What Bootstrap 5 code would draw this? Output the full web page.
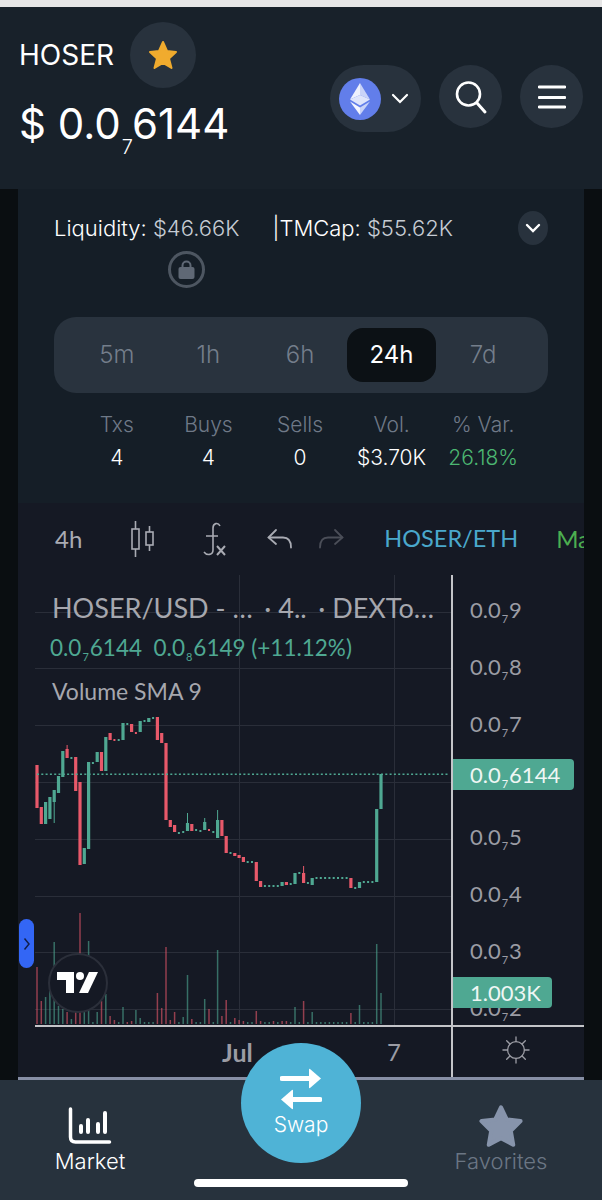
<!DOCTYPE html>
<html lang="en">
<head>
<meta charset="UTF-8" />
<meta name="viewport" content="width=device-width, initial-scale=1.0" />
<title>HOSER</title>
<link href="https://cdn.jsdelivr.net/npm/bootstrap@5.3.3/dist/css/bootstrap.min.css" rel="stylesheet" />
<style>
	html, body { height: 1200px; overflow: hidden; }
	body { background: #0a0e11; font-family: Inter, "Liberation Sans", sans-serif; font-weight: 300; color: #fff; }
	.top-strip { height: 7px; background: #e6e6e6; }

	.app-head { height: 182px; background: #18212a; padding: 15px 19px 0; }
	.coin-name { font-size: 28px; font-weight: 400; }
	.coin-price { font-size: 42px; font-weight: 400; line-height: 1; margin-top: 15px; white-space: nowrap; }
	.coin-price span { font-size: 20px; font-weight: 300; position: relative; top: 15px; margin: 0 -1px 0 1px; }
	.round-btn { background: #28323d; border-radius: 50%; width: 63px; height: 63px; }
	.fav-btn { width: 66px; height: 66px; margin-left: 16px; }
	.net-btn { width: 91px; height: 67px; border-radius: 34px; background: #28323d; padding-left: 9px; gap: 10px; }
	.head-right { margin-top: 43px; gap: 18px; }

	.info-card { width: 566px; height: 314px; margin-left: 18px; background: #151e27; padding: 22px 36px 0; }
	.liq-row { font-size: 22px; line-height: 32px; white-space: nowrap; }
	.liq-row b { font-weight: 300; color: #c6ccd4; }
	.liq-gap { margin-left: 33px; }
	.liq-more { width: 30px; height: 34px; border-radius: 50%; background: #28323d; margin-left: auto; }
	.lock-ring { width: 37px; height: 37px; border: 3px solid #4d5661; border-radius: 50%; margin: 6px 0 0 114px; }

	.range-tabs { height: 76px; margin-top: 29px; background: #29333e; border-radius: 22px; padding: 0 17px; }
	.range-tabs div { width: 91.6px; text-align: center; font-size: 24px; color: #747e8b; }
	.range-tabs span { display: block; width: 89px; height: 54px; line-height: 54px; margin: 0 auto; border-radius: 16px; }
	.range-tabs .on span { background: #0c1115; color: #fff; font-weight: 400; }
	.stat-row { padding: 0 17px; margin-top: 15px; }
	.stat-row > div { width: 91.6px; text-align: center; white-space: nowrap; font-size: 21px; line-height: 33px; }
	.stat-row small { display: block; font-size: 21px; color: #6f7987; }
	.up-txt { color: #4cb772; }

	.chart-box { width: 566px; height: 577px; margin-left: 18px; background: #151924; overflow: hidden; position: relative; font-family: Lato, "DejaVu Sans", sans-serif; font-weight: 400; }
	.chart-tools { height: 72px; padding-left: 37px; white-space: nowrap; font-size: 24px; color: #a9abb3; }
	.chart-tools > * { flex-shrink: 0; }
	.tool-candle { margin-left: 48px; }
	.tool-fx { margin-left: 45px; }
	.tool-undo { margin-left: 41px; }
	.tool-redo { margin-left: 25px; }
	.pair-link { color: #4aa8cc; margin-left: 40px; font-size: 23.5px; }
	.tool-more { color: #4caf50; margin-left: 38px; }

	.chart-main { height: 450px; }
	.pane-wrap { width: 433px; height: 450px; position: relative; }
	.pane-wrap svg { display: block; }
	.chart-legend { position: absolute; left: 34px; top: 13px; width: 382px; color: #a6a7ae; }
	.leg-title { font-size: 27px; line-height: 40px; white-space: nowrap; }
	.leg-vals { font-size: 22.5px; line-height: 40px; color: #4fa892; white-space: nowrap; margin-left: -2px; }
	.leg-vol { font-size: 23px; line-height: 46px; margin-top: -4px; }
	.chart-legend i, .price-axis i { font-style: normal; font-size: 11px; position: relative; top: 5px; margin: 0 1px; }

	.price-axis { width: 133px; height: 450px; overflow: hidden; border-left: 2px solid #c4c5c9; padding: 7px 0 0 17px; font-size: 22px; color: #9b9ca4; position: relative; }
	.price-axis .axis-row { height: 56.8px; line-height: 56.8px; }
	.price-axis .axis-tag { position: absolute; left: 0; height: 31px; line-height: 31px; background: #4fa892; color: #eef6f4; padding-left: 17px; border-radius: 0 4px 4px 0; }
	.price-axis .tag-price { top: 184px; width: 121px; }
	.price-axis .tag-vol { top: 402px; width: 99px; }

	.time-axis { height: 52px; border-top: 2px solid #c4c5c9; margin-left: 17px; }
	.time-scale { width: 416px; height: 50px; position: relative; font-size: 24px; color: #9b9ca4; }
	.time-scale span { position: absolute; top: 7px; }
	.time-jul { left: 187px; font-weight: 700; font-size: 25px; }
	.time-seven { left: 352px; }
	.time-corner { width: 133px; border-left: 2px solid #c4c5c9; padding: 0 5px 4px 0; }
	.chart-foot { height: 3px; background: #878fa5; }

	.side-handle { position: absolute; left: 1px; top: 416px; width: 15px; height: 49px; background: #3366f5; border-radius: 8px; }
	.tv-badge { position: absolute; left: 30px; top: 450px; width: 60px; height: 60px; border-radius: 50%; background: #151924; border: 2px solid #2b2f3a; }

	.bottom-nav { height: 120px; background: #27323d; position: relative; font-size: 22px; }
	.nav-item-box { position: absolute; width: 130px; text-align: center; line-height: 30px; }
	.nav-item-box svg { display: block; margin: 0 auto; }
	.nav-market { left: 25px; top: 27px; }
	.nav-market div { margin-top: 1px; }
	.nav-favs { left: 436px; top: 24px; color: #6b7684; }
	.nav-favs div { margin-top: -2px; }
	.swap-fab { position: absolute; left: 241px; top: -37px; width: 120px; height: 120px; border-radius: 50%; background: #4fb3d6; text-align: center; font-size: 21px; padding-top: 25px; line-height: 26px; }
	.swap-fab svg { display: block; margin: 0 auto 2px; }
	.home-bar { position: absolute; left: 194px; top: 99px; width: 214px; height: 8px; background: #fff; border-radius: 4px; }
</style>
</head>
<body>
	<div class="top-strip"></div>

	<!-- Header -->
	<header class="app-head d-flex justify-content-between">
		<div>
			<div class="d-flex align-items-center">
				<div class="coin-name">HOSER</div>
				<div class="round-btn fav-btn d-flex align-items-center justify-content-center">
					<svg width="34" height="34" viewBox="0 0 34 34"><polygon points="17,4 21,13 30,14 23,20.500 25.500,30 17,25 8.500,30 11,20.500 4,14 13,13" fill="#f0ab2e" stroke="#f0ab2e" stroke-width="2" stroke-linejoin="round"/></svg>
				</div>
			</div>
			<div class="coin-price">$ 0.0<span>7</span>6144</div>
		</div>
		<div class="d-flex align-items-start head-right">
			<div class="net-btn d-flex align-items-center">
				<svg width="42" height="42" viewBox="0 0 42 42">
					<circle cx="21" cy="21" r="21" fill="#627eea"/>
					<path d="M21 5v12l-10 4.500z" fill="#eef1fd"/>
					<path d="M21 5v12l10 4.500z" fill="#c9d3f8"/>
					<path d="M11 21.500l10-4.500 10 4.500-10 6z" fill="#dfe5fb"/>
					<path d="M11 23.500l10 6v7.500z" fill="#f4f6fe"/>
					<path d="M31 23.500l-10 6v7.500z" fill="#c9d3f8"/>
				</svg>
				<svg width="18" height="12" viewBox="0 0 18 12"><path d="M2 2l7 7 7-7" fill="none" stroke="#fff" stroke-width="2.200" stroke-linecap="round"/></svg>
			</div>
			<div class="round-btn d-flex align-items-center justify-content-center">
				<svg width="34" height="36" viewBox="0 0 34 36"><circle cx="14.500" cy="15" r="11.500" fill="none" stroke="#fff" stroke-width="2.600"/><path d="M23 24l8 9" stroke="#fff" stroke-width="3" stroke-linecap="round"/></svg>
			</div>
			<div class="round-btn d-flex align-items-center justify-content-center">
				<svg width="28" height="24" viewBox="0 0 28 24"><path d="M1 2h26M1 12.500h26M1 22h26" stroke="#fff" stroke-width="2.800" stroke-linecap="round"/></svg>
			</div>
		</div>
	</header>

	<!-- Liquidity + stats -->
	<section class="info-card">
		<div class="d-flex align-items-center liq-row">
			<span>Liquidity: <b>$46.66K</b></span>
			<span class="liq-gap">|TMCap: <b>$55.62K</b></span>
			<div class="liq-more d-flex align-items-center justify-content-center">
				<svg width="16" height="11" viewBox="0 0 16 11"><path d="M2 2l6 6 6-6" fill="none" stroke="#fff" stroke-width="2.400" stroke-linecap="round"/></svg>
			</div>
		</div>
		<div class="lock-ring d-flex align-items-center justify-content-center">
			<svg width="17" height="20" viewBox="0 0 17 20"><path d="M4.500 8V5.500a4 4 0 0 1 8 0V8" fill="none" stroke="#5f6875" stroke-width="2"/><rect x="0.500" y="7" width="16" height="12" rx="2" fill="#5f6875"/></svg>
		</div>
		<div class="range-tabs d-flex align-items-center">
			<div><span>5m</span></div><div><span>1h</span></div><div><span>6h</span></div><div class="on"><span>24h</span></div><div><span>7d</span></div>
		</div>
		<div class="stat-row d-flex">
			<div><small>Txs</small>4</div>
			<div><small>Buys</small>4</div>
			<div><small>Sells</small>0</div>
			<div><small>Vol.</small>$3.70K</div>
			<div><small>% Var.</small><span class="up-txt">26.18%</span></div>
		</div>
	</section>

	<!-- Chart -->
	<section class="chart-box">
		<div class="chart-tools d-flex align-items-center">
			<span>4h</span>
			<svg class="tool-candle" width="25" height="38" viewBox="0 0 25 38" fill="none" stroke="#a9abb3" stroke-width="1.600"><rect x="2" y="9" width="7" height="20"/><path d="M5.500 1v8M5.500 29v8"/><rect x="16" y="12" width="7" height="13"/><path d="M19.500 6v6M19.500 25v6"/></svg>
			<svg class="tool-fx" width="26" height="36" viewBox="0 0 26 36" fill="none" stroke="#a9abb3" stroke-width="1.600"><path d="M20 5c-2-4-7-3-7 2v22c0 5-6 6-9 2M6 15h12"/><path d="M17 25l8 9M25 25l-8 9" stroke-width="2"/></svg>
			<svg class="tool-undo" width="26" height="22" viewBox="0 0 26 22" fill="none" stroke="#a9abb3" stroke-width="1.800" stroke-linecap="round"><path d="M9 2L1.500 9.500 9 16"/><path d="M2 9.500h14c5 0 8 3 8 10"/></svg>
			<svg class="tool-redo" width="26" height="22" viewBox="0 0 26 22" fill="none" stroke="#4b4e58" stroke-width="1.800" stroke-linecap="round"><path d="M17 2l7.500 7.500L17 16"/><path d="M24 9.500H10c-5 0-8 3-8 10"/></svg>
			<span class="pair-link">HOSER/ETH</span>
			<span class="tool-more">Market</span>
		</div>

		<div class="chart-main d-flex">
			<div class="pane-wrap">
				<svg id="pane" width="433" height="450" viewBox="18 575 433 450"></svg>
				<div class="chart-legend">
					<div class="leg-title d-flex justify-content-between"><span>HOSER/USD - …</span><span>· 4..</span><span>· DEXTo…</span></div>
					<div class="leg-vals">0.0<i>7</i>6144&nbsp; 0.0<i>8</i>6149 (+11.12%)</div>
					<div class="leg-vol">Volume SMA 9</div>
				</div>
			</div>
			<div class="price-axis">
				<div class="axis-row">0.0<i>7</i>9</div>
				<div class="axis-row">0.0<i>7</i>8</div>
				<div class="axis-row">0.0<i>7</i>7</div>
				<div class="axis-row"></div>
				<div class="axis-row">0.0<i>7</i>5</div>
				<div class="axis-row">0.0<i>7</i>4</div>
				<div class="axis-row">0.0<i>7</i>3</div>
				<div class="axis-row">0.0<i>7</i>2</div>
				<div class="axis-tag tag-price">0.0<i>7</i>6144</div>
				<div class="axis-tag tag-vol">1.003K</div>
			</div>
		</div>

		<div class="time-axis d-flex">
			<div class="time-scale">
				<span class="time-jul">Jul</span>
				<span class="time-seven">7</span>
			</div>
			<div class="time-corner d-flex align-items-center justify-content-center">
				<svg width="28" height="28" viewBox="0 0 30 30" fill="none" stroke="#9b9ca4" stroke-width="1.400" stroke-linecap="round"><circle cx="15" cy="15" r="9"/><path d="M15 1v5M15 24v5M1 15h5M24 15h5M5 5l3.500 3.500M21.500 21.500L25 25M25 5l-3.500 3.500M8.500 21.500L5 25"/></svg>
			</div>
		</div>
		<div class="chart-foot"></div>

		<div class="side-handle d-flex align-items-center justify-content-center">
			<svg width="8" height="14" viewBox="0 0 8 14"><path d="M1.500 1.500L6 7l-4.500 5.500" fill="none" stroke="#12204d" stroke-width="1.500"/></svg>
		</div>
		<div class="tv-badge d-flex align-items-center justify-content-center">
			<svg width="42" height="22" viewBox="0 0 42 22" fill="#fff"><path d="M0 0h17v21H9V8H0z"/><circle cx="23" cy="4" r="4"/><path d="M32 0h9l-10 21h-9z"/></svg>
		</div>
	</section>

	<!-- Bottom nav -->
	<nav class="bottom-nav">
		<div class="nav-item-box nav-market">
			<svg width="44" height="38" viewBox="0 0 44 38" fill="none" stroke="#fff" stroke-linecap="round"><path d="M2.500 2v28q0 5 5 5h34" stroke-width="3.500"/><path d="M13 25v-6M20 25V13M30 25v-8M37 25V6" stroke-width="4"/></svg>
			<div>Market</div>
		</div>
		<div class="swap-fab">
			<svg width="42" height="42" viewBox="0 0 42 42" fill="#fff"><path d="M2 10.500h28" stroke="#fff" stroke-width="5" stroke-linecap="round"/><path d="M29 1.500q0-1 1-.5l11 9.500-11 9.500q-1 .5-1-.5z"/><path d="M40 31.500H12" stroke="#fff" stroke-width="5" stroke-linecap="round"/><path d="M13 22.500q0-1-1-.5L1 31.500 12 41q1 .5 1-.5z"/></svg>
			<div>Swap</div>
		</div>
		<div class="nav-item-box nav-favs">
			<svg width="46" height="44" viewBox="0 0 56 54"><polygon points="28,4 35,19 52,21 40,33 43,50 28,42 13,50 16,33 4,21 21,19" fill="#8794ab" stroke="#8794ab" stroke-width="5" stroke-linejoin="round"/></svg>
			<div>Favorites</div>
		</div>
		<div class="home-bar"></div>
	</nav>

	<script src="https://cdn.jsdelivr.net/npm/bootstrap@5.3.3/dist/js/bootstrap.bundle.min.js"></script>
	<script>
		// candles: [colour, top, bottom, wickTop, wickBottom]  y in page px
		const UP = "#4fa892", DOWN = "#e8596a";
		const candles = [
			[DOWN,765,808],[DOWN,807,824],[UP,802,824],[UP,797,819],[UP,790,802,790,823],[UP,776,793],[UP,751,777],
			[DOWN,749,758,745,758],[UP,757,759],[DOWN,757,791],[DOWN,782,865],[UP,848,864],[UP,762,849],[UP,762,764],
			[UP,752,762],[DOWN,752,771],[UP,737,771],[DOWN,733,740],[DOWN,739,741],[UP,739,741],[UP,723,740],[UP,723,725],
			[DOWN,724,732],[DOWN,732,734],[UP,721,732],[UP,720,722],[UP,718,722],[UP,717,719],[DOWN,717,740],[DOWN,733,743],
			[DOWN,743,820],[DOWN,820,827],[DOWN,825,832],[UP,832,834],[UP,831,833],[UP,823,831,813,831],[DOWN,824,831],
			[UP,829,831],[UP,830,832],[UP,822,830,818,830],[DOWN,829,831],[UP,831,833],[UP,820,838,810,838],[DOWN,820,836],
			[DOWN,836,853],[UP,852,854],[DOWN,853,856],[DOWN,855,858],[DOWN,857,862],[UP,861,863],[UP,861,863],[DOWN,862,881],
			[DOWN,881,887],[UP,885,887],[UP,885,887],[UP,885,887],[UP,885,887],[UP,882,886],[DOWN,882,885],[UP,883,885],
			[UP,873,884],[UP,872,874],[DOWN,873,883,866,883],[UP,882,884],[UP,878,885],[UP,877,879],[UP,877,879],[UP,877,879],
			[UP,877,879],[UP,877,879],[UP,877,879],[UP,877,879],[UP,877,879],[DOWN,878,888],[UP,887,889],[UP,882,888],
			[UP,881,883],[UP,881,883],[UP,881,883],[UP,809,882],[UP,774,809]
		];
		// volume bar heights in px, negative is red
		const volumes = [
			-57,-23,27,33,82,18,15,-12,5,-13,-111,13,83,2,12,-23,30,-8,-4,2,17,-2,-3,14,6,2,2,2,-31,-16,-77,-4,-12,2,7,49,-5,2,2,25,-15,2,
			74,-8,-24,2,-6,-4,-3,2,2,-13,-3,2,2,-3,2,-3,-3,2,17,2,-23,2,12,2,2,2,2,2,2,2,2,-11,2,19,2,2,2,80,31
		];

		const svgNs = "http://www.w3.org/2000/svg";
		const pane = document.getElementById("pane");

		function addRect(x, y, w, h, fill, opacity) {
			const r = document.createElementNS(svgNs, "rect");
			r.setAttribute("x", x);
			r.setAttribute("y", y);
			r.setAttribute("width", w);
			r.setAttribute("height", h);
			r.setAttribute("fill", fill);
			if (opacity) r.setAttribute("opacity", opacity);
			pane.appendChild(r);
		}

		// grid
		[612, 668, 725, 782, 839, 896, 952, 1009].forEach((y) => addRect(35, y, 416, 1, "#2a2e39"));
		[239, 394].forEach((x) => addRect(x, 575, 1, 450, "#2a2e39"));

		const stepX = 4.3, startX = 37;
		volumes.forEach((v, i) => {
			const h = Math.abs(v);
			addRect(startX + i * stepX - 0.75, 1024 - h, 1.5, h, v < 0 ? DOWN : UP, 0.6);
		});
		candles.forEach((c, i) => {
			const x = startX + i * stepX;
			if (c[3]) addRect(x - 0.5, c[3], 1, c[4] - c[3], c[0]);
			const isDot = c[2] - c[1] <= 2;
			addRect(x - (isDot ? 1 : 1.6), c[1], isDot ? 2 : 3.2, c[2] - c[1], c[0]);
		});
		// last price line
		for (let x = 37; x < 448; x += 4.3) addRect(x, 773.5, 2, 1.5, UP);
	</script>
</body>
</html>
